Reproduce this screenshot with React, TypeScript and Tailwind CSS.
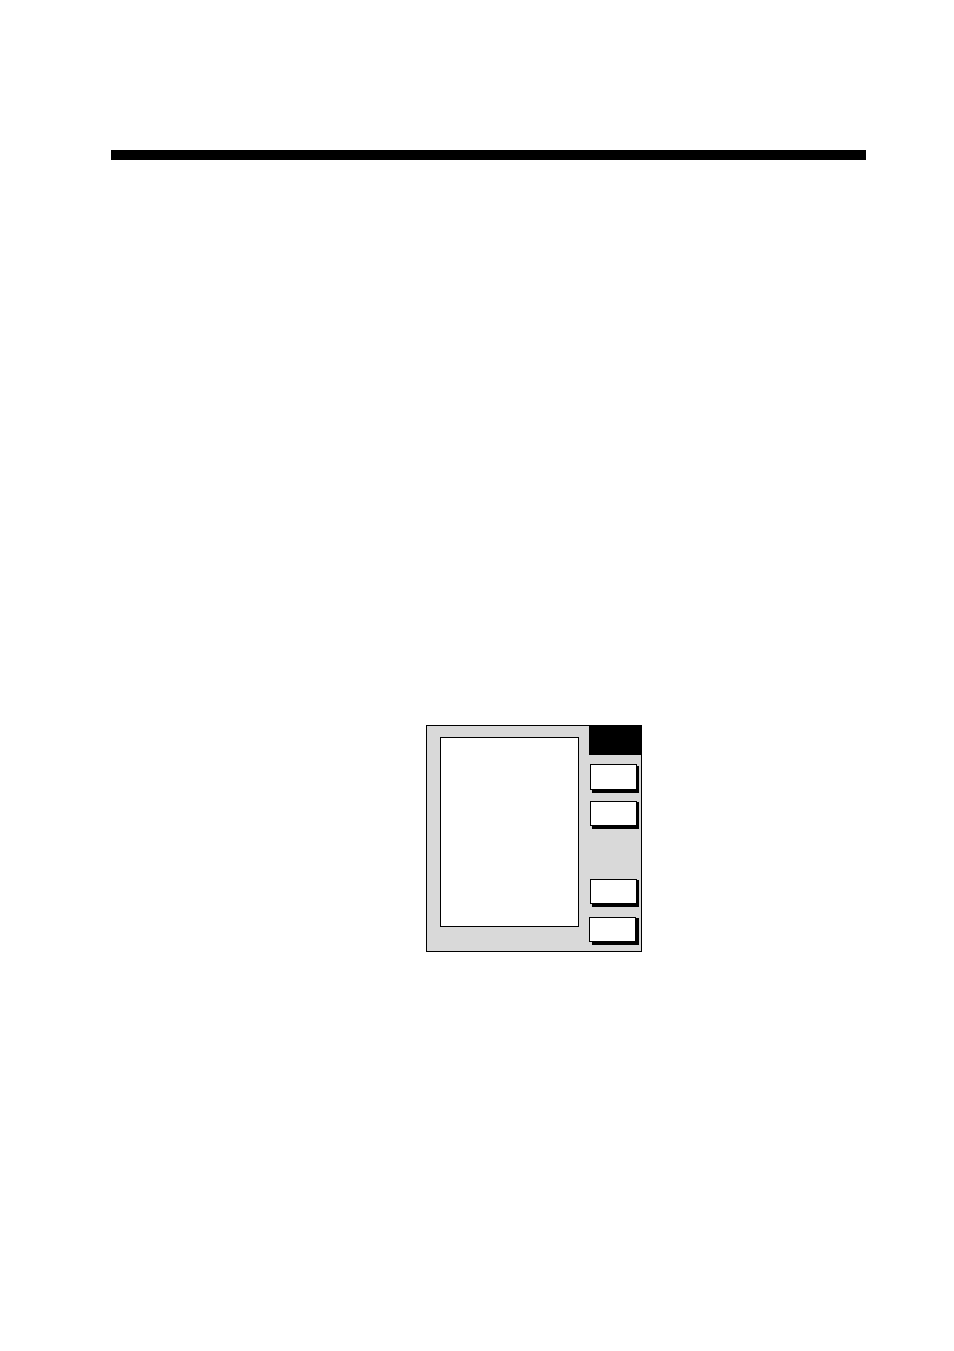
import clsx from "clsx";

interface SoftKeyProps {
  label: string;
  className?: string;
}

const SoftKey = ({ label, className }: SoftKeyProps) => {
  return (
    <button
      type="button"
      aria-label={label}
      className={clsx(
        "block w-[47px] border border-black bg-white",
        className ?? "ml-px h-[25px] shadow-[2px_1px_0_#000,2px_3px_0_#000]"
      )}
    />
  );
};

const DisplayPanel = () => {
  return (
    <section className="flex w-fit border border-black bg-[#d9d9d9]">
      <div className="mt-[11px] mb-6 ml-[13px] w-[139px] border border-black bg-white" />
      <div className="ml-[10px] w-[52px] pb-[9px]">
        <div className="h-[29px] bg-black" />
        <div className="mt-[9px] space-y-[11px]">
          <SoftKey label="Key 1" className="ml-px h-[26px] shadow-[2px_2px_0_#000,2px_3px_0_#000]" />
          <SoftKey label="Key 2" />
        </div>
        <div className="mt-[53px] space-y-[13px]">
          <SoftKey label="Key 3" />
          <SoftKey label="Key 4" className="h-[25px] shadow-[3px_1px_0_#000,3px_3px_0_#000]" />
        </div>
      </div>
    </section>
  );
};

export default function App() {
  return (
    <main className="min-h-screen bg-white pt-[150px] pr-[88px] pl-[111px]">
      <hr className="h-[10px] border-0 bg-black" />
      <div className="mt-[565px] ml-[315px]">
        <DisplayPanel />
      </div>
    </main>
  );
}
